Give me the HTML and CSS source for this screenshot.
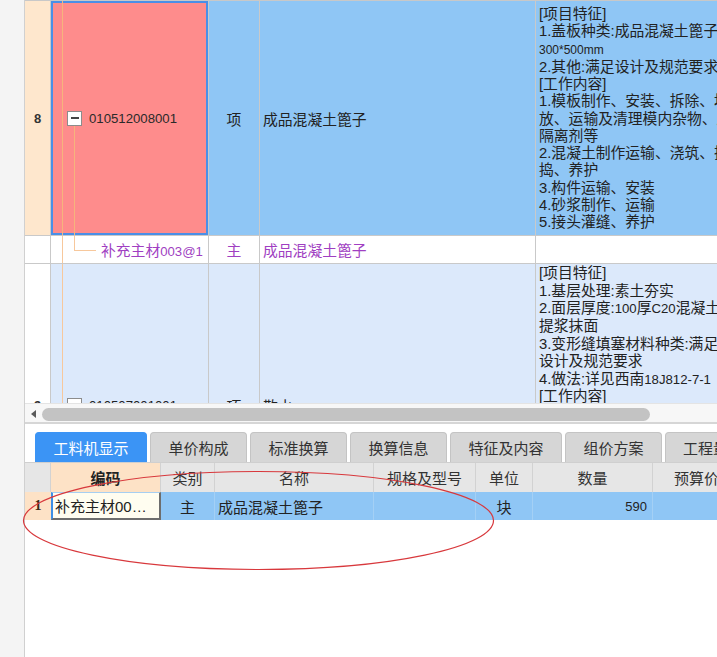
FILE: index.html
```html
<!DOCTYPE html>
<html>
<head>
<meta charset="utf-8">
<link rel="stylesheet" href="styles.css">
</head>
<body>
<div class="app">
  <div class="gutter"></div>
  <div class="main">
    <div class="grid-top">
      <div class="tgrid">
        <div class="c num r8">8</div>
        <div class="c code sel">
          <span class="tl tl-a"></span><span class="tl tl-b8"></span>
          <span class="box"></span><span class="lat">010512008001</span>
        </div>
        <div class="c type r8">项</div>
        <div class="c name r8">成品混凝土篦子</div>
        <div class="c desc r8">
          <div>[项目特征]</div>
          <div>1.盖板种类:成品混凝土篦子</div>
          <div><span class="sm">300*500mm</span></div>
          <div>2.其他:满足设计及规范要求</div>
          <div>[工作内容]</div>
          <div>1.模板制作、安装、拆除、堆</div>
          <div>放、运输及清理模内杂物、刷</div>
          <div>隔离剂等</div>
          <div>2.混凝土制作运输、浇筑、振</div>
          <div>捣、养护</div>
          <div>3.构件运输、安装</div>
          <div>4.砂浆制作、运输</div>
          <div>5.接头灌缝、养护</div>
        </div>

        <div class="c num sub"></div>
        <div class="c code sub subcode">
          <span class="tl tl-a lt"></span><span class="tl tl-v"></span><span class="tl tl-h"></span>
          <span class="purple">补充主材<span class="lat">003@1</span></span>
        </div>
        <div class="c type sub purple">主</div>
        <div class="c name sub purple">成品混凝土篦子</div>
        <div class="c desc sub"></div>

        <div class="c num r9w">9</div>
        <div class="c code r9">
          <span class="tl tl-a lt"></span>
          <span class="box"></span><span class="lat">010507001001</span>
        </div>
        <div class="c type r9">项</div>
        <div class="c name r9">散水</div>
        <div class="c desc r9 d9">
          <div>[项目特征]</div>
          <div>1.基层处理:素土夯实</div>
          <div>2.面层厚度:<span class="lat">100</span>厚<span class="lat">C20</span>混凝土一次</div>
          <div>提浆抹面</div>
          <div>3.变形缝填塞材料种类:满足</div>
          <div>设计及规范要求</div>
          <div>4.做法:详见西南<span class="lat">18J812-7-1</span></div>
          <div>[工作内容]</div>
          <div>1.地基找平、夯实</div>
          <div>2.铺设垫层</div>
          <div>3.模板制作、安装、拆除</div>
          <div>4.混凝土制作、运输、浇筑、</div>
          <div>振捣、养护</div>
          <div>5.变形缝填塞</div>
          <div>6.材料运输</div>
          <div>7.清理现场</div>
        </div>
      </div>
    </div>

    <div class="hscroll"><span class="arrow"></span><span class="thumb"></span></div>

    <div class="bottom">
      <div class="tabs">
        <div class="tab active w112">工料机显示</div>
        <div class="tab w97">单价构成</div>
        <div class="tab w97">标准换算</div>
        <div class="tab w97">换算信息</div>
        <div class="tab w112">特征及内容</div>
        <div class="tab w97">组价方案</div>
        <div class="tab w112 last">工程量明细</div>
      </div>
      <div class="btable">
        <div class="bh"></div>
        <div class="bh peach bold">编码</div>
        <div class="bh">类别</div>
        <div class="bh">名称</div>
        <div class="bh">规格及型号</div>
        <div class="bh">单位</div>
        <div class="bh">数量</div>
        <div class="bh">预算价</div>

        <div class="bd bnum">1</div>
        <div class="bd edit">补充主材00…</div>
        <div class="bd ctr">主</div>
        <div class="bd left">成品混凝土篦子</div>
        <div class="bd"></div>
        <div class="bd ctr">块</div>
        <div class="bd right">590</div>
        <div class="bd"></div>
      </div>
    </div>
  </div>
</div>
<svg class="annot" width="717" height="657" viewBox="0 0 717 657">
  <ellipse cx="258.5" cy="520.5" rx="235" ry="49" fill="none" stroke="#d8383c" stroke-width="1.2"/>
</svg>
</body>
</html>
```

FILE: styles.css
```css
* { box-sizing: border-box; }
html, body { margin: 0; padding: 0; }
body {
  width: 717px;
  height: 657px;
  overflow: hidden;
  background: #fff;
  font-family: "Liberation Sans", "Noto Sans CJK SC", sans-serif;
  color: #222;
  position: relative;
}
.app { display: flex; height: 657px; }
.gutter {
  width: 25px;
  flex: none;
  background: #f4f4f4;
  border-right: 1px solid #d0d0d0;
}
.main {
  flex: 1;
  min-width: 0;
  display: flex;
  flex-direction: column;
  overflow: hidden;
}

/* top grid */
.grid-top {
  height: 403px;
  flex: none;
  overflow: hidden;
  border-top: 1px solid #c8c8c8;
}
.tgrid {
  display: grid;
  grid-template-columns: 26px 158px 51px 276px 340px;
  width: 851px;
  font-size: 14.8px;
}
.c {
  border-right: 1px solid #c9c9c9;
  border-bottom: 1px solid #c9c9c9;
  display: flex;
  align-items: center;
  position: relative;
  white-space: nowrap;
  overflow: hidden;
}
.num {
  justify-content: center;
  font-weight: bold;
  font-size: 13px;
  color: #333;
}
.type { justify-content: center; }
.name { padding-left: 3px; }
.desc {
  flex-direction: column;
  align-items: flex-start;
  justify-content: center;
  padding: 5px 0 4px 3px;
  line-height: 17.25px;
}
.d9 { padding: 1px 0 0 3px; line-height: 17.6px; }
.lat { font-size: 13.2px; }
.sm { font-size: 12px; }

.r8 { background: #8fc6f5; }
.r8.num { background: #fee7cd; }
.sel {
  background: #fe8c8c;
  box-shadow: inset 0 0 0 2px #4a8fe7;
  color: #2a2a2a;
}
.code { padding-left: 16px; }
.sub { background: #fff; height: 28px; }
.subcode { padding-left: 50px; }
.purple { color: #a03fc2; }
.r9 { background: #dce9fb; }
.r9w { background: #fff; }

.box {
  width: 15px;
  height: 15px;
  flex: none;
  border: 1px solid #8c8c8c;
  background: #fff;
  margin-right: 7px;
  position: relative;
}
.box::after {
  content: "";
  position: absolute;
  left: 3px;
  width: 8px;
  top: 5.5px;
  height: 2px;
  background: #444;
}
.tl { position: absolute; background: #f6b47c; }
.tl.lt { background: #f7c89c; }
.tl-a { left: 11px; top: 0; bottom: 0; width: 1px; }
.tl-b8 { left: 23px; top: calc(50% + 8px); bottom: 0; width: 1px; }
.tl-v { left: 23px; top: 0; height: 50%; width: 1px; background: #f7c89c; }
.tl-h { left: 23px; top: 50%; width: 22px; height: 1px; background: #f7c89c; }

/* horizontal scrollbar */
.hscroll {
  height: 21px;
  flex: none;
  display: flex;
  align-items: flex-start;
  padding-left: 6px;
  background: #f7f7f7;
  border-top: 1px solid #e4e4e4;
  border-bottom: 2px solid #d6d6d6;
}
.arrow {
  width: 0;
  height: 0;
  margin-top: 6px;
  border-right: 5px solid #5a5a5a;
  border-top: 4px solid transparent;
  border-bottom: 4px solid transparent;
}
.thumb {
  width: 608px;
  height: 13px;
  margin-top: 4px;
  margin-left: 6px;
  border-radius: 7px;
  background: #c3c3c3;
}

/* bottom panel */
.bottom { flex: 1; padding-top: 8px; }
.tabs {
  display: flex;
  gap: 3px;
  padding-left: 10px;
  height: 30px;
  font-size: 15px;
  width: 800px;
}
.tab {
  flex: none;
  display: flex;
  align-items: center;
  justify-content: center;
  background: #d6d6d6;
  border: 1px solid #c4c4c4;
  border-bottom: none;
  border-radius: 4px 4px 0 0;
  color: #333;
  white-space: nowrap;
}
.tab.active { background: #3b94f5; border-color: #3b94f5; color: #fff; }
.tab.last { justify-content: flex-start; padding-left: 17px; }
.w112 { width: 112px; }
.w97 { width: 97px; }

.btable {
  display: grid;
  grid-template-columns: 26px 110px 54px 159px 102px 57px 120px 88px;
  font-size: 15px;
  border-top: 1px solid #cfcfcf;
  width: 720px;
}
.bh {
  height: 29px;
  background: #e6e6e6;
  border-right: 1px solid #d2d2d2;
  display: flex;
  align-items: center;
  justify-content: center;
  color: #333;
  white-space: nowrap;
}
.bh.peach { background: #fde2c6; }
.bold { font-weight: bold; color: #222; }
.bd {
  height: 28px;
  background: #8fc6f5;
  border-right: 1px solid #a4d0f5;
  display: flex;
  align-items: center;
  white-space: nowrap;
  overflow: hidden;
}
.bnum {
  background: #fde2c6;
  border-right: none;
  justify-content: center;
  font-family: "Liberation Serif", serif;
  font-weight: bold;
  font-size: 14px;
  color: #3a2a1a;
}
.edit {
  background: #fffdf0;
  border-left: 2px solid #3d8fe6;
  border-top: 1px solid #a6cff2;
  border-right: 2px solid #6d6d6d;
  border-bottom: 2px solid #6d6d6d;
  padding-left: 2px;
  color: #222;
}
.ctr { justify-content: center; }
.left { padding-left: 3px; }
.right { justify-content: flex-end; padding-right: 5px; font-size: 13px; }

.annot {
  position: absolute;
  left: 0;
  top: 0;
  pointer-events: none;
}
```
